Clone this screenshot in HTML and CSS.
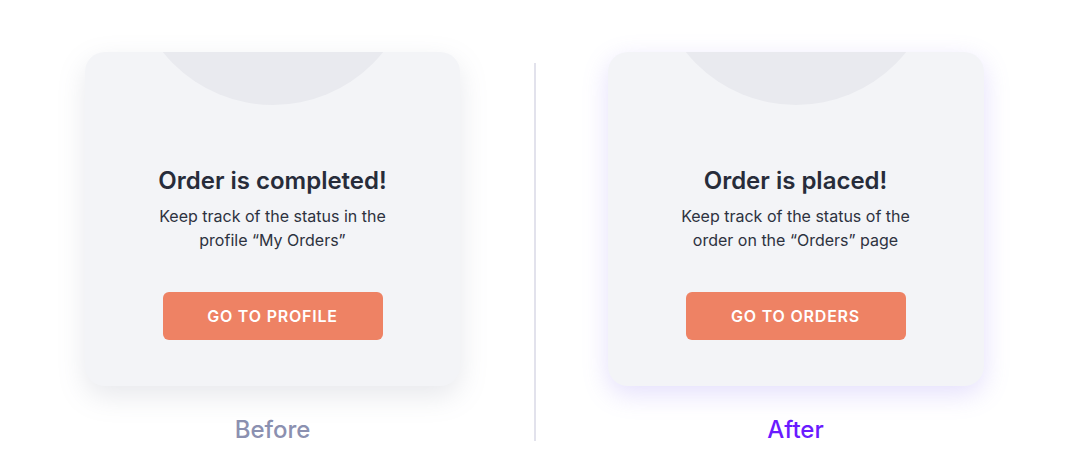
FILE: index.html
```html
<!DOCTYPE html>
<html>
<head>
<meta charset="utf-8">
<link rel="stylesheet" href="styles.css">
</head>
<body>
<div class="page">
  <section class="col">
    <div class="card card-before">
      <div class="blob"></div>
      <h2 class="title">Order is completed!</h2>
      <p class="desc">Keep track of the status in the<br>profile “My Orders”</p>
      <button class="btn">GO TO PROFILE</button>
    </div>
    <div class="label label-before">Before</div>
  </section>
  <div class="divider"></div>
  <section class="col">
    <div class="card card-after">
      <div class="blob"></div>
      <h2 class="title">Order is placed!</h2>
      <p class="desc">Keep track of the status of the<br>order on the “Orders” page</p>
      <button class="btn">GO TO ORDERS</button>
    </div>
    <div class="label label-after">After</div>
  </section>
</div>
</body>
</html>
```
FILE: styles.css
```css
* { box-sizing: border-box; }
html, body { margin: 0; padding: 0; background: #ffffff; }
body { font-family: Inter, "Noto Sans", sans-serif; width: 1067px; height: 476px; overflow: hidden; }
.page {
  display: flex;
  align-items: flex-start;
  padding-left: 85px;
  padding-top: 52px;
}
.col {
  display: flex;
  flex-direction: column;
  align-items: center;
  width: 375px;
}
.divider {
  width: 2px;
  height: 378px;
  margin: 11px 72px 0 74px;
  background: #e2e2ec;
}
.card {
  position: relative;
  overflow: hidden;
  width: 375px;
  height: 334px;
  border-radius: 20px;
  background: #f3f4f7;
  display: flex;
  flex-direction: column;
  align-items: center;
  padding-top: 114px;
}
.card-before { box-shadow: 0 10px 28px rgba(120, 125, 150, 0.18); }
.card-after { width: 376px; box-shadow: 0 8px 26px rgba(130, 110, 240, 0.22); }
.blob {
  position: absolute;
  width: 282px;
  height: 282px;
  border-radius: 50%;
  background: #e9eaef;
  left: 50%;
  top: -229px;
  transform: translateX(-50%);
}
.title {
  margin: 0;
  font-size: 24px;
  font-weight: 600;
  line-height: 30px;
  color: #272c3a;
  letter-spacing: 0;
}
.desc {
  margin: 8px 0 0;
  font-size: 16px;
  line-height: 24px;
  color: #2d3240;
  text-align: center;
}
.btn {
  margin-top: 40px;
  width: 220px;
  height: 48px;
  border: none;
  border-radius: 6px;
  background: #ee8264;
  color: #ffffff;
  font-family: Inter, "Noto Sans", sans-serif;
  font-size: 16px;
  font-weight: 600;
  letter-spacing: 0.8px;
}
.label {
  margin-top: 28px;
  font-size: 24px;
  line-height: 32px;
  font-weight: 500;
}
.label-before { color: #8b90b0; }
.label-after { color: #6a1bff; }
```
